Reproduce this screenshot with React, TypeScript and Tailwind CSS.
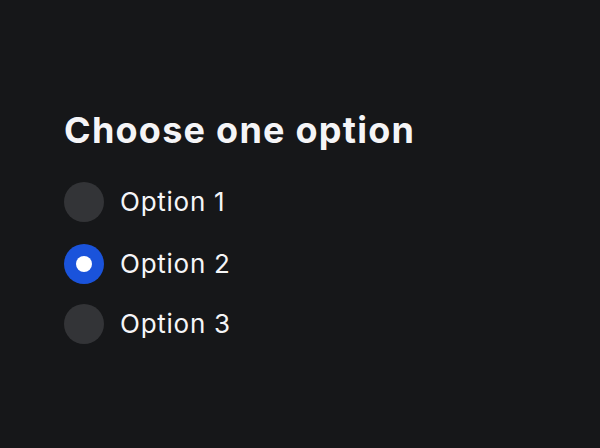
import React, { useState } from 'react';

const options = ['Option 1', 'Option 2', 'Option 3'];

const App = () => {
  const [selected, setSelected] = useState(1);

  return (
    <div
      className="w-[600px] h-[448px] bg-[#161719] text-[#f5f5f7] px-16 pt-[104px]"
      style={{ fontFamily: 'Inter, "Noto Sans", sans-serif' }}
    >
      <h1 className="text-[36px] leading-[52px] font-bold tracking-[1.25px]">Choose one option</h1>
      <div className="mt-[26px] flex flex-col">
        {options.map((label, i) => (
          <label
            key={label}
            className={`flex items-center gap-4 cursor-pointer ${i === 1 ? 'mt-[22px]' : ''} ${i === 2 ? 'mt-5' : ''}`}
            onClick={() => setSelected(i)}
          >
            {selected === i ? (
              <span className="w-10 h-10 rounded-full bg-[#1a53db] flex items-center justify-center">
                <span className="w-4 h-4 rounded-full bg-white" />
              </span>
            ) : (
              <span className="w-10 h-10 rounded-full bg-[#333437]" />
            )}
            <span className="text-[26px] leading-10 tracking-[0.75px]">{label}</span>
          </label>
        ))}
      </div>
    </div>
  );
};

export default App;
